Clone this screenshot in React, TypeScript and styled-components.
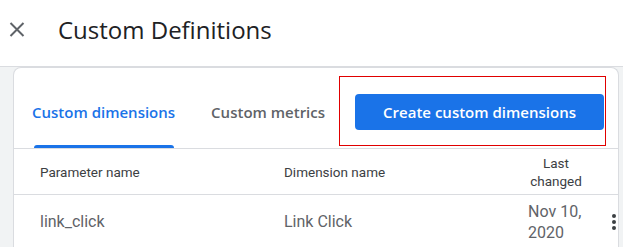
import styled, { createGlobalStyle } from "styled-components";

const GlobalStyle = createGlobalStyle`
  html, body {
    margin: 0;
    padding: 0;
    background: #f1f3f4;
    font-family: Roboto, "Liberation Sans", Arial, sans-serif;
  }
  * { box-sizing: border-box; }
`;

const Page = styled.div`
  width: 623px;
  height: 247px;
  overflow: hidden;
  display: flex;
  flex-direction: column;
`;

const Header = styled.header`
  height: 67px;
  flex-shrink: 0;
  background: #ffffff;
  border-bottom: 1px solid #dadce0;
  display: flex;
  align-items: center;
  padding: 0 0 7px 9px;
`;

const CloseButton = styled.button`
  border: 0;
  background: none;
  padding: 0;
  width: 16px;
  height: 15px;
  display: flex;
  cursor: pointer;
`;

const Title = styled.h1`
  margin: 0 0 0 33px;
  font-family: "Open Sans", Roboto, sans-serif;
  font-size: 24px;
  font-weight: 400;
  color: #202124;
`;

const Main = styled.main`
  flex: 1;
  background: #f1f3f4;
  padding: 0 4px 0 13px;
  display: flex;
`;

const Card = styled.section`
  flex: 1;
  background: #ffffff;
  border: 1px solid #dadce0;
  border-bottom: 0;
  border-radius: 8px 8px 0 0;
  display: flex;
  flex-direction: column;
`;

const TabBar = styled.div`
  height: 81px;
  border-bottom: 1px solid #dadce0;
  display: flex;
  align-items: stretch;
  padding-left: 18px;
  gap: 36px;
`;

const Tab = styled.div<{ $active?: boolean }>`
  display: flex;
  flex-direction: column;
  padding-top: 11px;
  font-family: "Open Sans", Roboto, sans-serif;
  font-size: 15px;
  font-weight: 600;
  color: ${(p) => (p.$active ? "#1a73e8" : "#5f6368")};
  cursor: pointer;
`;

const TabLabel = styled.span`
  flex: 1;
  display: flex;
  align-items: center;
  white-space: nowrap;
`;

const TabIndicator = styled.span<{ $active?: boolean }>`
  height: 3px;
  margin: 0 1px 0 2px;
  border-radius: 3px 3px 0 0;
  background: ${(p) => (p.$active ? "#1a73e8" : "transparent")};
`;

const Highlight = styled.div`
  align-self: flex-start;
  margin: 8px 0 0 -22px;
  border: 1px solid #e00000;
  padding: 17px 1px 15px 15px;
  display: flex;
`;

const PrimaryButton = styled.button`
  width: 249px;
  height: 36px;
  border: 0;
  border-radius: 4px;
  background: #1a73e8;
  color: #ffffff;
  font-family: "Open Sans", Roboto, sans-serif;
  font-size: 15px;
  font-weight: 600;
  cursor: pointer;
`;

const Row = styled.div<{ $head?: boolean }>`
  display: grid;
  grid-template-columns: 244px 244px 56px 1fr;
  align-items: center;
  padding-left: 26px;
  min-height: ${(p) => (p.$head ? "46px" : "53px")};
  border-bottom: ${(p) => (p.$head ? "1px solid #dadce0" : "0")};
  font-size: ${(p) => (p.$head ? "13.5px" : "16px")};
  line-height: ${(p) => (p.$head ? "18px" : "21px")};
  color: ${(p) => (p.$head ? "#3c4043" : "#5f6368")};
`;

const Cell = styled.div<{ $center?: boolean }>`
  text-align: ${(p) => (p.$center ? "center" : "left")};
`;

const MenuButton = styled.button`
  justify-self: end;
  margin-right: 1px;
  border: 0;
  background: none;
  padding: 0;
  width: 6px;
  display: flex;
  flex-direction: column;
  align-items: center;
  gap: 2px;
  cursor: pointer;
`;

const Dot = styled.span`
  width: 4px;
  height: 4px;
  border-radius: 50%;
  background: #3c4043;
`;

const App = () => {
  const rows = [{ param: "link_click", name: "Link Click", changed: "Nov 10, 2020" }];

  return (
    <>
      <GlobalStyle />
      <Page>
        <Header>
          <CloseButton aria-label="Close">
            <svg width="16" height="15" viewBox="0 0 16 15">
              <path d="M1.5 1L14.5 14M14.5 1L1.5 14" stroke="#5f6368" strokeWidth="2" />
            </svg>
          </CloseButton>
          <Title>Custom Definitions</Title>
        </Header>
        <Main>
          <Card>
            <TabBar>
              <Tab $active>
                <TabLabel>Custom dimensions</TabLabel>
                <TabIndicator $active />
              </Tab>
              <Tab>
                <TabLabel>Custom metrics</TabLabel>
                <TabIndicator />
              </Tab>
              <Highlight>
                <PrimaryButton>Create custom dimensions</PrimaryButton>
              </Highlight>
            </TabBar>
            <Row $head>
              <Cell>Parameter name</Cell>
              <Cell>Dimension name</Cell>
              <Cell $center>Last changed</Cell>
              <span />
            </Row>
            {rows.map((r) => (
              <Row key={r.param}>
                <Cell>{r.param}</Cell>
                <Cell>{r.name}</Cell>
                <Cell>{r.changed}</Cell>
                <MenuButton aria-label="More">
                  <Dot />
                  <Dot />
                  <Dot />
                </MenuButton>
              </Row>
            ))}
          </Card>
        </Main>
      </Page>
    </>
  );
};

export default App;
